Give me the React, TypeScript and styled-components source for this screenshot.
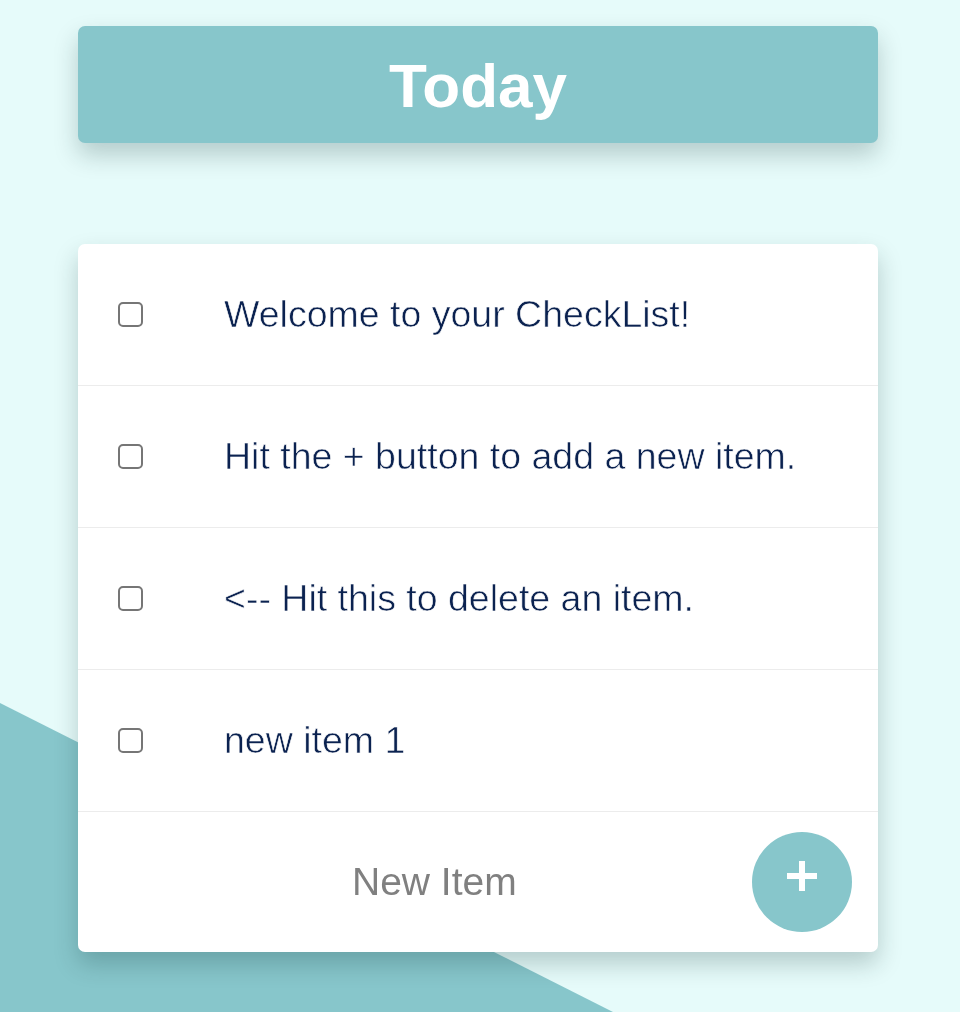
import React from "react";
import styled, { createGlobalStyle } from "styled-components";

const TEAL = "#87c6cb";

const Global = createGlobalStyle`
  html, body { margin: 0; padding: 0; }
  body {
    background: #e6fbfa;
    font-family: "Liberation Sans", Arial, sans-serif;
    min-height: 1012px;
    overflow: hidden;
  }
  body::before {
    content: "";
    position: fixed;
    left: 0;
    top: 0;
    width: 960px;
    height: 1012px;
    background: ${TEAL};
    clip-path: polygon(0 703px, 613px 1012px, 0 1012px);
    z-index: 0;
  }
  #root { position: relative; z-index: 1; }
`;

const Page = styled.main`
  display: flex;
  flex-direction: column;
  align-items: center;
  padding: 26px 4px 0 0;
  gap: 101px;
`;

const Header = styled.header`
  width: 800px;
  height: 117px;
  background: ${TEAL};
  border-radius: 7px;
  box-shadow: 0 12px 24px rgba(0, 40, 40, 0.22);
  display: flex;
  align-items: center;
  justify-content: center;
`;

const Title = styled.h1`
  margin: 0;
  color: #fff;
  font-size: 62px;
  font-weight: 700;
  line-height: 1;
  padding-top: 2px;
`;

const Card = styled.section`
  width: 800px;
  background: #fff;
  border-radius: 7px;
  box-shadow: 0 12px 24px rgba(0, 40, 40, 0.22);
  display: flex;
  flex-direction: column;
`;

const Row = styled.div`
  height: 142px;
  display: flex;
  align-items: center;
  border-bottom: 1.5px solid #ececec;
  box-sizing: border-box;
  padding-left: 40px;
`;

const Check = styled.span`
  width: 25px;
  height: 25px;
  box-sizing: border-box;
  border: 2px solid #767676;
  border-radius: 5px;
  flex: none;
`;

const Label = styled.span`
  margin-left: 81px;
  color: #0b2250;
  font-size: 37.5px;
  font-weight: 400;
  -webkit-text-stroke: 0.6px #fff;
  paint-order: normal;
`;

const Footer = styled.div`
  height: 140px;
  display: flex;
  align-items: center;
  padding-right: 26px;
`;

const Placeholder = styled.span`
  flex: 1;
  padding-left: 274px;
  color: #808080;
  font-size: 39px;
`;

const AddButton = styled.button`
  width: 100px;
  height: 100px;
  border-radius: 50%;
  border: none;
  background: ${TEAL};
  display: flex;
  align-items: center;
  justify-content: center;
  padding: 0 0 12px 0;
  box-sizing: border-box;
`;

const items = [
  "Welcome to your CheckList!",
  "Hit the + button to add a new item.",
  "<-- Hit this to delete an item.",
  "new item 1",
];

export default function App() {
  return (
    <>
      <Global />
      <Page>
        <Header>
          <Title>Today</Title>
        </Header>
        <Card>
          {items.map((t) => (
            <Row key={t}>
              <Check />
              <Label>{t}</Label>
            </Row>
          ))}
          <Footer>
            <Placeholder>New Item</Placeholder>
            <AddButton aria-label="add">
              <svg width="30" height="30" viewBox="0 0 30 30">
                <rect x="12" y="0" width="6" height="30" fill="#fff" />
                <rect x="0" y="12" width="30" height="6" fill="#fff" />
              </svg>
            </AddButton>
          </Footer>
        </Card>
      </Page>
    </>
  );
}
